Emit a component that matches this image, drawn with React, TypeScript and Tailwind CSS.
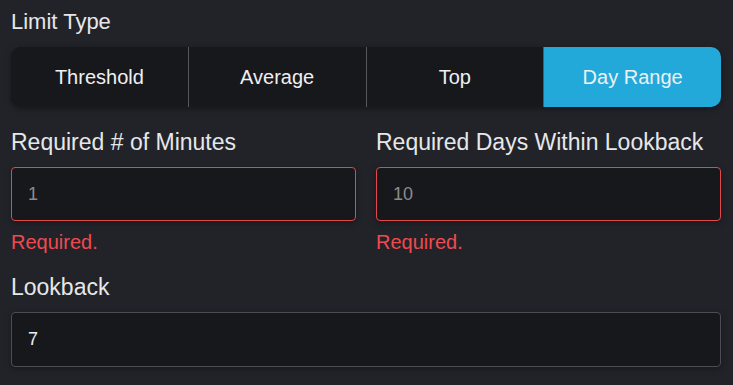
import React, { useState } from 'react';

const limitTypes = ['Threshold', 'Average', 'Top', 'Day Range'];

export default function App() {
  const [active, setActive] = useState('Day Range');

  return (
    <div className="min-h-screen w-full bg-[#212329] pl-[11px] pr-[12px] pt-2 font-['Liberation_Sans',Arial,sans-serif] text-[#e6e7e9]">
      {/* Limit type selector */}
      <div className="mb-[11px] h-[28px] text-[22px] leading-[28px]">Limit Type</div>
      <div className="flex h-[60px] overflow-hidden rounded-[10px] bg-[#17181c] shadow-[0_2px_6px_rgba(0,0,0,0.35)]">
        {limitTypes.map((t, i) => (
          <button
            key={t}
            onClick={() => setActive(t)}
            className={
              'flex flex-1 items-center justify-center text-[20px] text-[#eef0f2] ' +
              (i > 0 ? 'border-l border-[#55575c] ' : '') +
              (active === t ? 'bg-[#22a9da]' : 'bg-[#17181c]')
            }
          >
            {t}
          </button>
        ))}
      </div>

      {/* Required fields */}
      <div className="mt-[21px] grid grid-cols-2 gap-x-[20px]">
        <Field label="Required # of Minutes" placeholder="1" />
        <Field label="Required Days Within Lookback" placeholder="10" />
      </div>

      {/* Lookback */}
      <div className="mt-[19px]">
        <div className="mb-[11px] h-[28px] text-[23px] leading-[28px]">Lookback</div>
        <input
          defaultValue="7"
          className="h-[55px] w-full rounded-[4px] border border-[#4b4d53] bg-[#17181c] px-4 text-[18px] text-[#eceef0] shadow-[0_2px_6px_rgba(0,0,0,0.3)] outline-none"
        />
      </div>
    </div>
  );
}

function Field({ label, placeholder }: { label: string; placeholder: string }) {
  return (
    <div>
      <div className="mb-[11px] h-[28px] whitespace-nowrap text-[23px] leading-[28px]">{label}</div>
      <input
        placeholder={placeholder}
        className="h-[54px] w-full rounded-[4px] border border-[#e0484b] bg-[#17181c] px-4 text-[18px] text-[#eceef0] shadow-[0_2px_6px_rgba(0,0,0,0.3)] outline-none placeholder:text-[#8a8b8e]"
      />
      <div className="mt-[9px] h-[24px] text-[20px] leading-[24px] text-[#ef4a4f]">Required.</div>
    </div>
  );
}
